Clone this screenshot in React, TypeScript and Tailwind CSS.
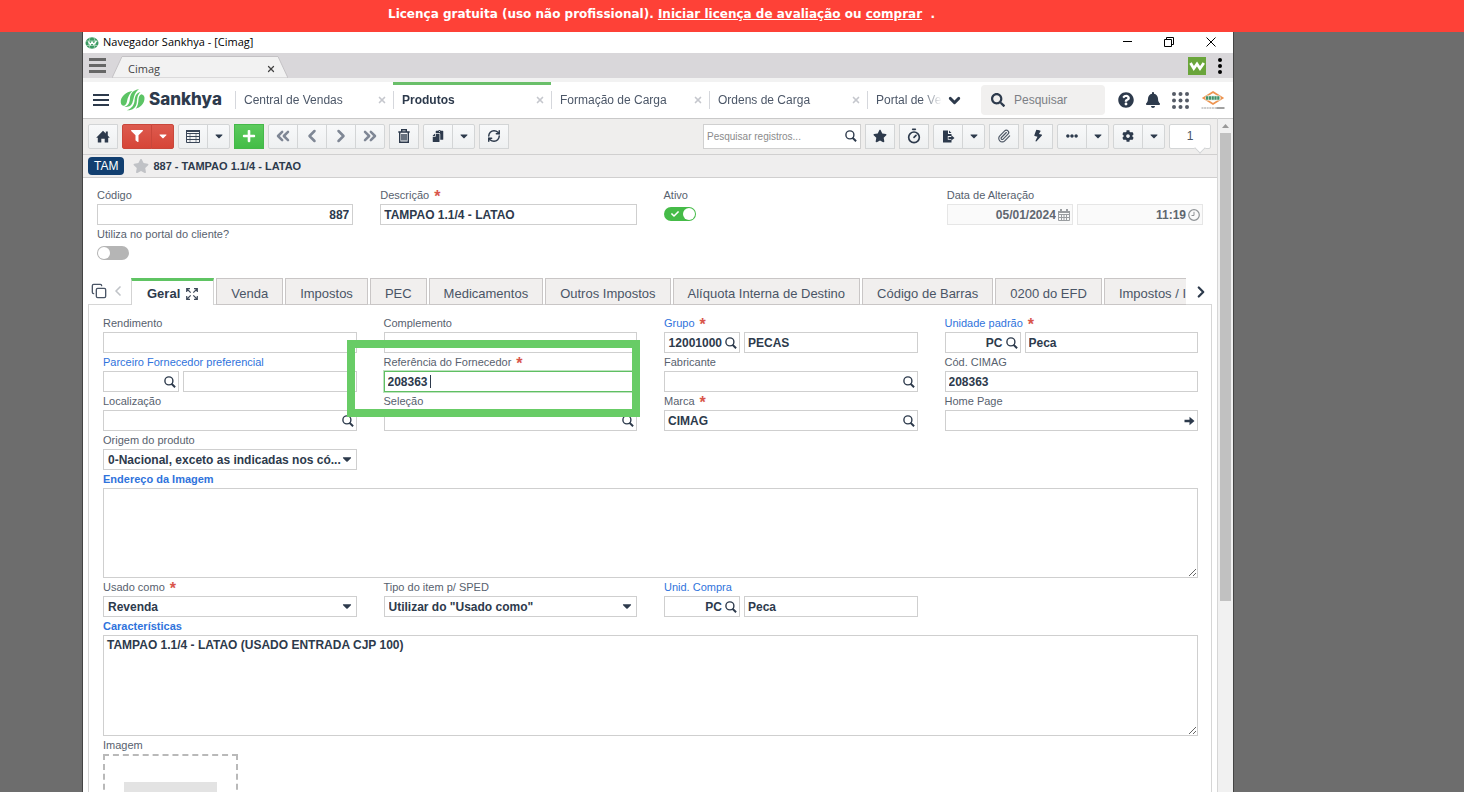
import type { ReactNode } from "react"
import {
  FaBell,
  FaBolt,
  FaCaretDown,
  FaCheck,
  FaCog,
  FaEllipsisH,
  FaFilter,
  FaPaste,
  FaPlus,
  FaQuestionCircle,
  FaSearch,
  FaStar,
} from "react-icons/fa"
import { ChevronDown, ChevronLeft, ChevronRight, ChevronsLeft, ChevronsRight, Copy, Paperclip, RefreshCw, Timer, X } from "lucide-react"

const navTabs = [
  { title: "Central de Vendas" },
  { title: "Produtos", active: true },
  { title: "Formação de Carga" },
  { title: "Ordens de Carga" },
  { title: "Portal de Vendas" },
]

const formTabs = [
  "Venda",
  "Impostos",
  "PEC",
  "Medicamentos",
  "Outros Impostos",
  "Alíquota Interna de Destino",
  "Código de Barras",
  "0200 do EFD",
  "Impostos / IPI",
]

const inputBox =
  "block h-[21px] w-full min-w-0 border border-[#cfcfcf] bg-white px-[3px] text-[12px] font-bold text-[#2d3a4c] outline-none"

const readOnlyBox =
  "block h-[21px] w-full min-w-0 border border-[#e6e6e6] bg-[#fafafa] pr-4 pl-[3px] text-right text-[12px] font-bold text-[#5f6770] outline-none"

/* ---------- drawings ---------- */

function GlobeIcon() {
  return (
    <svg viewBox="0 0 14 12" className="h-3 w-3.5 shrink-0">
      <ellipse cx="7" cy="6" rx="6.5" ry="5.8" fill="#3c9a62" />
      <path d="M1 4h12M1 8.5h12M5 .5q-3 5.5 0 11M9 .5q3 5.5 0 11" stroke="#b9e0c6" strokeWidth=".7" fill="none" />
      <path d="M3.5 4.500l1.800 3 1.700-2.500 1.800 2.500 2.700-3.500" stroke="#fff" strokeWidth="1.300" fill="none" />
    </svg>
  )
}

function SankhyaMark() {
  return (
    <svg viewBox="0 0 25 22" className="h-[22px] w-[25px] shrink-0" fill="#5cc465">
      <path d="M12.500 2C6 2.800 0 8 .8 13.500c.3 2.300 1.800 3.500 3.400 3.200C7.500 15.500 6.500 11.500 8.300 8 9.300 5.500 10.500 3.500 12.500 2z" />
      <path d="M19 .3c-5.500.6-8.500 4-9 8.700-.4 4.200-1 7.500-5.600 9 3 .3 6.500-.6 7.900-4C14 9.800 13.500 4.500 19 .3z" />
      <path d="M20.500 3c-4.800 1.300-5.600 4.700-5.900 8.500-.4 4.200-2.300 7.600-7.800 9.800 5.800.3 9.200-2.700 9.900-7.300.6-4.100.3-7.800 3.800-11z" />
      <path d="M21.500 5.300c2.300.5 3.500 2.500 2.900 5.500-.9 4.600-4.300 7.700-8.600 8.900 2.200-3.300 2.400-5.600 2.700-9.200.2-2.400.8-4.500 3-5.200z" />
    </svg>
  )
}

function HomeIcon() {
  return (
    <svg viewBox="0 0 14 13" className="h-[13px] w-3.5" fill="currentColor">
      <path d="M7 .8L9.800 3.600V1.500h2v4.100L13.800 7.700h-1.600v4.800H8.700V8.700H5.300v3.800H1.800V7.700H.2z" />
    </svg>
  )
}

function GridIcon() {
  return (
    <svg viewBox="0 0 14 13" className="h-[13px] w-3.5" fill="none" stroke="#3a4658">
      <path d="M.5.5h13v12H.5zM.5 3.500h13M.5 6.500h13M.5 9.500h13" />
      <path d="M4 3.500v9M10 3.500v9" strokeWidth=".6" />
      <path d="M0 1h14" strokeWidth="2" />
    </svg>
  )
}

function ExportIcon() {
  return (
    <svg viewBox="0 0 13 13" className="h-[13px] w-[13px]" fill="currentColor">
      <path d="M1 .5h5V4h3.500v2H5.800v3.800h3.700v2.700H1zM7 .5L9.500 3H7z" />
      <path d="M6.500 7h2.800V5.200l3.200 2.700-3.200 2.700V8.900H6.500z" />
    </svg>
  )
}

function CalendarIcon() {
  return (
    <svg viewBox="0 0 12 12" className="h-3 w-3" fill="none" stroke="#9a9da0">
      <path d="M.5 2.500h11v9H.5zM.5 5.500h11M.5 8.500h11M3.500 5v6.500M6 5v6.500M8.500 5v6.500" />
      <path d="M0 3h12M3 0v2M9 0v2" strokeWidth="2" />
    </svg>
  )
}

function ClockIcon() {
  return (
    <svg viewBox="0 0 12 12" className="h-3 w-3" fill="none" stroke="#8f9396">
      <circle cx="6" cy="6" r="5.300" strokeWidth="1.200" />
      <path d="M6 2.800V6.500H3.500" />
    </svg>
  )
}

function TrashIcon() {
  return (
    <svg viewBox="0 0 12 14" className="h-3.5 w-3" fill="none" stroke="#2d3a4c" strokeWidth="1.400">
      <path d="M.3 3h11.400M3.700 2.700V.8h4.600v1.900M1.700 3.500v9.700h8.600V3.500" />
      <path d="M4 5v6.500M8 5v6.500M6 5v6.500" />
    </svg>
  )
}

function ArrowIcon() {
  return (
    <svg viewBox="0 0 11 10" className="h-2.5 w-[11px]" fill="#2d3a4c">
      <path d="M.5 3.800h5V.8L10.500 5 5.500 9.200v-3h-5z" />
    </svg>
  )
}

function AppsIcon() {
  const spots = [2, 8.5, 15]
  return (
    <svg viewBox="0 0 17 17" className="h-[17px] w-[17px]" fill="#555b66">
      {spots.map((y) => spots.map((x) => <circle key={`${x}-${y}`} cx={x} cy={y} r="2" />))}
    </svg>
  )
}

function CimagLogo() {
  return (
    <svg viewBox="0 0 24 20" className="h-5 w-6 shrink-0">
      <path d="M12 2L21.500 8 12 14 2.500 8z" fill="#fff" stroke="#ee9450" strokeWidth="1.800" />
      <rect x="4.500" y="5.500" width="15" height="5" rx="1.500" fill="#e8f3ec" />
      <path d="M5 8h14" stroke="#3f9068" strokeWidth="3.500" strokeDasharray="2.200 .6" />
      <path d="M.5 18h15" stroke="#999" strokeDasharray="2 .6" />
      <path d="M15.500 18h8" stroke="#444" />
    </svg>
  )
}

function ExpandIcon() {
  return (
    <svg viewBox="0 0 12 12" className="h-3 w-3" fill="none" stroke="#3f4a5a" strokeWidth="1.200">
      <path d="M.7 4V.7H4M8 .7h3.300V4M11.300 8v3.300H8M4 11.300H.7V8M1 1l3.700 3.700M11 1L7.300 4.700M11 11L7.300 7.300M1 11l3.700-3.700" />
    </svg>
  )
}

function MiniSearch() {
  return (
    <svg viewBox="0 0 12 12" className="h-3 w-3" fill="none" stroke="#2d3a4c">
      <circle cx="4.900" cy="4.900" r="4" strokeWidth="1.400" />
      <path d="M7.500 7.800l3.600 3.400" strokeWidth="2" />
    </svg>
  )
}

/* ---------- toolbar ---------- */

function ToolButton({ label, children, tone = "plain", narrow = false }: { label: string; children: ReactNode; tone?: "plain" | "red" | "green"; narrow?: boolean }) {
  const tones = {
    plain: "border-[#d3d5d6] bg-linear-to-b from-[#f8f9fa] to-[#eef0f1] text-[#2d3a4c]",
    red: "border-[#c9473b] bg-linear-to-b from-[#dd5a4e] to-[#d64537] text-white",
    green: "border-[#45b849] bg-linear-to-b from-[#5cca5c] to-[#43bd47] text-white",
  }
  return (
    <button
      type="button"
      aria-label={label}
      className={`flex h-[25px] shrink-0 items-center justify-center border first:rounded-l-xs last:rounded-r-xs ${narrow ? "w-[23px]" : "w-[30px]"} ${tones[tone]}`}
    >
      {children}
    </button>
  )
}

function Group({ children }: { children: ReactNode }) {
  return <div className="flex shrink-0 -space-x-px">{children}</div>
}

const caret = <FaCaretDown className="h-3 w-3" />

function Toolbar() {
  return (
    <div className="flex h-9 items-center gap-1 border-t border-[#c9c9c9] bg-[#efeeed] pr-1.5 pb-px pl-[5px]">
      <ToolButton label="Início"><HomeIcon /></ToolButton>
      <Group>
        <ToolButton label="Filtro" tone="red"><FaFilter className="h-3 w-3" /></ToolButton>
        <ToolButton label="Opções de filtro" tone="red" narrow>{caret}</ToolButton>
      </Group>
      <Group>
        <ToolButton label="Modo grade"><GridIcon /></ToolButton>
        <ToolButton label="Opções de grade" narrow>{caret}</ToolButton>
      </Group>
      <ToolButton label="Adicionar" tone="green"><FaPlus className="h-3.5 w-3.5" /></ToolButton>
      <Group>
        <ToolButton label="Primeiro"><ChevronsLeft className="h-5 w-5 text-[#7f8795]" strokeWidth={3} /></ToolButton>
        <ToolButton label="Anterior"><ChevronLeft className="h-5 w-5 text-[#7f8795]" strokeWidth={3} /></ToolButton>
        <ToolButton label="Próximo"><ChevronRight className="h-5 w-5 text-[#7f8795]" strokeWidth={3} /></ToolButton>
        <ToolButton label="Último"><ChevronsRight className="h-5 w-5 text-[#7f8795]" strokeWidth={3} /></ToolButton>
      </Group>
      <ToolButton label="Excluir"><TrashIcon /></ToolButton>
      <Group>
        <ToolButton label="Duplicar"><FaPaste className="h-3 w-3 -scale-x-100" /></ToolButton>
        <ToolButton label="Opções de duplicar" narrow>{caret}</ToolButton>
      </Group>
      <ToolButton label="Atualizar"><RefreshCw className="h-3.5 w-3.5" strokeWidth={2.5} /></ToolButton>

      <div className="ml-auto flex h-[25px] w-[158px] items-center border border-[#d0d0d0] bg-white pr-[3px]">
        <input
          aria-label="Pesquisar registros"
          placeholder="Pesquisar registros..."
          className="min-w-0 flex-1 bg-transparent pl-[3px] text-[10px] outline-none placeholder:text-[#8b8b8b]"
        />
        <MiniSearch />
      </div>
      <ToolButton label="Favorito"><FaStar className="h-3.5 w-3.5" /></ToolButton>
      <ToolButton label="Tempo"><Timer className="h-4 w-4" strokeWidth={2.5} /></ToolButton>
      <Group>
        <ToolButton label="Exportar"><ExportIcon /></ToolButton>
        <ToolButton label="Opções de exportar" narrow>{caret}</ToolButton>
      </Group>
      <ToolButton label="Anexos"><Paperclip className="h-3.5 w-3.5 text-[#4d5765]" strokeWidth={2} /></ToolButton>
      <ToolButton label="Ações"><FaBolt className="h-3 w-3 rotate-12" /></ToolButton>
      <Group>
        <ToolButton label="Mais"><FaEllipsisH className="h-3 w-3" /></ToolButton>
        <ToolButton label="Mais opções" narrow>{caret}</ToolButton>
      </Group>
      <Group>
        <ToolButton label="Configurar"><FaCog className="h-3 w-3" /></ToolButton>
        <ToolButton label="Opções de configuração" narrow>{caret}</ToolButton>
      </Group>
      <div className="relative flex h-[25px] w-[42px] shrink-0 items-center justify-center rounded-xs border border-[#d3d5d6] bg-white text-[12px] text-[#4a5566]">
        1
        <span className="absolute right-1.5 -bottom-1 h-2 w-2 rotate-45 border-r border-b border-[#d3d5d6] bg-white" />
      </div>
    </div>
  )
}

/* ---------- fields ---------- */

function FieldLabel({ id, text, required, link, strong }: { id: string; text: string; required?: boolean; link?: boolean; strong?: boolean }) {
  return (
    <label
      htmlFor={id}
      className={`flex h-[18px] items-center text-[11px] leading-[18px] whitespace-nowrap ${link ? "text-[#2f73dc]" : "text-[#57616e]"} ${strong ? "font-bold" : ""}`}
    >
      {text}
      {required && <span className="ml-[5px] h-[18px] text-base leading-[22px] font-bold text-[#d9554b]">*</span>}
    </label>
  )
}

type FieldProps = {
  id: string
  label: string
  value?: string
  required?: boolean
  link?: boolean
  icon?: ReactNode
}

function Field({ id, label, value, required, link, icon }: FieldProps) {
  return (
    <div className="min-w-0">
      <FieldLabel id={id} text={label} required={required} link={link} />
      <div className="relative">
        <input id={id} defaultValue={value} className={inputBox} />
        {icon && <span className="absolute inset-y-0 right-[3px] flex items-center">{icon}</span>}
      </div>
    </div>
  )
}

// code + description pair
function LookupField({ id, label, code, value, required, link }: FieldProps & { code?: string }) {
  return (
    <div className="min-w-0">
      <FieldLabel id={id} text={label} required={required} link={link} />
      <div className="flex gap-1">
        <div className="relative w-[76px] shrink-0">
          <input id={id} defaultValue={code} className={`${inputBox} pr-[17px] text-right`} />
          <span className="absolute inset-y-0 right-[3px] flex items-center"><MiniSearch /></span>
        </div>
        <input aria-label={`${label} descrição`} defaultValue={value} className={inputBox} />
      </div>
    </div>
  )
}

function SelectField({ id, label, value, required }: FieldProps) {
  return (
    <div className="min-w-0">
      <FieldLabel id={id} text={label} required={required} />
      <div className="relative">
        <select id={id} className={`${inputBox} appearance-none pl-1`}>
          <option>{value}</option>
        </select>
        <FaCaretDown className="pointer-events-none absolute top-[3px] right-[3px] h-3.5 w-3.5 text-[#2d3a4c]" />
      </div>
    </div>
  )
}

function Toggle({ id, on }: { id: string; on?: boolean }) {
  return (
    <span className="relative flex h-3.5 w-8">
      <input
        id={id}
        type="checkbox"
        role="switch"
        defaultChecked={on}
        className="h-3.5 w-8 appearance-none rounded-full bg-[#b5b5b5] checked:bg-[#45bb48]"
      />
      {on && <FaCheck className="pointer-events-none absolute top-[3px] left-1.5 h-2 w-2.5 text-white" />}
      <span className={`pointer-events-none absolute top-px h-3 w-3 rounded-full bg-white ${on ? "right-px" : "left-px"}`} />
    </span>
  )
}

/* ---------- sections ---------- */

function TitleBar() {
  return (
    <>
      <div className="flex h-[21px] items-center bg-white pr-[17px] pl-0.5 font-['Open_Sans',sans-serif] text-[11px] text-black">
        <GlobeIcon />
        <span className="ml-1 flex-1">Navegador Sankhya - [Cimag]</span>
        <div className="flex items-center gap-8 pb-0.5">
          <button type="button" aria-label="Minimizar" className="h-px w-[9px] bg-black" />
          <button type="button" aria-label="Restaurar">
            <svg viewBox="0 0 10 10" className="h-2.5 w-2.5" fill="none" stroke="#000">
              <path d="M.5 2.500h7v7h-7zM2.500 2.500v-2h7v7h-2" />
            </svg>
          </button>
          <button type="button" aria-label="Fechar">
            <svg viewBox="0 0 10 10" className="h-2.5 w-2.5" stroke="#000">
              <path d="M.5.5l9 9M9.500.5l-9 9" />
            </svg>
          </button>
        </div>
      </div>
      <div className="flex h-[25px] items-end bg-[#d9d7da] pr-2.5 pl-1.5">
        <button type="button" aria-label="Menu" className="flex h-[25px] w-[17px] flex-col justify-center gap-[3px]">
          <span className="h-[3px] bg-[#666]" />
          <span className="h-[3px] bg-[#666]" />
          <span className="h-[3px] bg-[#666]" />
        </button>
        <div className="relative ml-1.5 h-[22px] w-[176px]">
          <svg viewBox="0 0 176 22" preserveAspectRatio="none" className="absolute inset-0 h-full w-full">
            <path d="M0 22L10 .5h156L176 22z" fill="#f2f2f2" stroke="#c4c2c5" />
          </svg>
          <div className="relative flex h-full items-center justify-between pt-1 pr-3 pl-4 font-['Open_Sans',sans-serif] text-[11px] text-[#444]">
            <span>Cimag</span>
            <X className="h-2.5 w-2.5" strokeWidth={3} />
          </div>
        </div>
        <div className="ml-auto flex h-[25px] items-center gap-[11px]">
          <svg viewBox="0 0 18 18" className="h-[18px] w-[18px]">
            <path d="M0 0h18v18H0z" fill="#6aa53b" />
            <path d="M2.500 6l3.300 5.500L9 7l3 4.500L15.800 6" fill="none" stroke="#fff" strokeWidth="2.800" />
          </svg>
          <button type="button" aria-label="Opções">
            <svg viewBox="0 0 6 16" className="h-4 w-1.5">
              <circle cx="3" cy="2" r="2" />
              <circle cx="3" cy="8" r="2" />
              <circle cx="3" cy="14" r="2" />
            </svg>
          </button>
        </div>
      </div>
      <div className="h-1 bg-[#f2f2f2]" />
    </>
  )
}

function NavBar() {
  return (
    <header className="flex h-[36px] items-center bg-white pr-2 pl-2.5">
      <button type="button" aria-label="Menu principal" className="flex w-4 flex-col gap-[3px]">
        <span className="h-0.5 bg-[#2d3a4c]" />
        <span className="h-0.5 bg-[#2d3a4c]" />
        <span className="h-0.5 bg-[#2d3a4c]" />
      </button>
      <a href="#" className="ml-[11px] flex items-center gap-1 text-[#2d3a4c]">
        <SankhyaMark />
        <span className="w-[86px] pb-0.5 font-['Inter',sans-serif] text-[17px] leading-5 font-extrabold">Sankhya</span>
      </a>
      <nav className="flex h-full min-w-0 flex-1 overflow-hidden mask-r-from-[calc(100%-20px)]">
        {navTabs.map((tab) => (
          <a
            key={tab.title}
            href="#"
            className={`flex w-[158px] shrink-0 items-center border-t-3 pb-1 text-[12px] ${tab.active ? "border-[#6abf6a] font-bold text-[#2d3a4c]" : "border-transparent text-[#4c5768]"}`}
          >
            <span className="h-[18px] w-[9px] border-l border-[#d5d7dc]" />
            {tab.title}
            <X className="mr-1.5 ml-auto h-2.5 w-2.5 text-[#c5c7cd]" strokeWidth={4} />
          </a>
        ))}
      </nav>
      <button type="button" aria-label="Mais abas" className="mr-1.5 ml-1">
        <ChevronDown className="h-[17px] w-[17px] text-[#2d3a4c]" strokeWidth={4} />
      </button>
      <div className="ml-3 flex h-[30px] w-[124px] items-center rounded-sm bg-[#f1f0ef] pl-2.5">
        <FaSearch className="h-3.5 w-3.5 shrink-0 text-[#2d3a4c]" />
        <input
          aria-label="Pesquisar"
          placeholder="Pesquisar"
          className="ml-[9px] w-20 bg-transparent text-[12px] outline-none placeholder:text-[#7c7f85]"
        />
      </div>
      <div className="ml-[13px] flex items-center gap-3 text-[#2d3a4c]">
        <button type="button" aria-label="Ajuda"><FaQuestionCircle className="h-4 w-4" /></button>
        <button type="button" aria-label="Notificações"><FaBell className="h-4 w-3.5" /></button>
        <button type="button" aria-label="Aplicativos"><AppsIcon /></button>
        <CimagLogo />
      </div>
    </header>
  )
}

function RecordHeader() {
  return (
    <section className="grid grid-cols-4 gap-x-[27px] px-3.5 pt-2">
      <div>
        <FieldLabel id="codigo" text="Código" />
        <input id="codigo" defaultValue="887" className={`${inputBox} text-right`} />
        <FieldLabel id="portal" text="Utiliza no portal do cliente?" />
        <div className="pt-[3px]"><Toggle id="portal" /></div>
      </div>
      <Field id="descricao" label="Descrição" value="TAMPAO 1.1/4 - LATAO" required />
      <div>
        <FieldLabel id="ativo" text="Ativo" />
        <div className="pt-[3px]"><Toggle id="ativo" on /></div>
      </div>
      <div>
        <FieldLabel id="data" text="Data de Alteração" />
        <div className="flex gap-1">
          <div className="relative flex-1">
            <input id="data" readOnly defaultValue="05/01/2024" className={readOnlyBox} />
            <span className="absolute inset-y-0 right-[3px] flex items-center"><CalendarIcon /></span>
          </div>
          <div className="relative flex-1">
            <input aria-label="Hora de Alteração" readOnly defaultValue="11:19" className={readOnlyBox} />
            <span className="absolute inset-y-0 right-[3px] flex items-center"><ClockIcon /></span>
          </div>
        </div>
      </div>
    </section>
  )
}

function FormTabs() {
  return (
    <div className="relative z-10 -mb-px flex h-[27px] items-end text-[13px] text-[#4a5566]">
      <button type="button" aria-label="Copiar" className="mb-1.5 ml-[3px]"><Copy className="h-4 w-4 text-[#4a5566]" strokeWidth={2} /></button>
      <button type="button" aria-label="Abas anteriores" className="mb-1.5 ml-[3px] text-[#c0c3c8]"><ChevronLeft className="h-4 w-4" strokeWidth={2.5} /></button>
      <div className="ml-[5px] flex min-w-0 flex-1 items-end gap-0.5 overflow-hidden">
        <button
          type="button"
          className="flex h-[27px] shrink-0 items-center gap-1.5 border-x border-t-3 border-x-[#d3d3d3] border-t-[#5fc463] bg-white px-[15px] pt-0.5 font-bold text-[#2d3a4c]"
        >
          Geral <ExpandIcon />
        </button>
        {formTabs.map((tab) => (
          <button
            key={tab}
            type="button"
            className="h-[27px] shrink-0 border border-[#c9c6c6] bg-[#f1efee] px-[14px] pt-1 whitespace-nowrap"
          >
            {tab}
          </button>
        ))}
      </div>
      <button type="button" aria-label="Próximas abas" className="mr-0.5 mb-1 ml-1.5 text-[#2d3a4c]"><ChevronRight className="h-[18px] w-[18px]" strokeWidth={3} /></button>
    </div>
  )
}

function GeneralPanel() {
  return (
    <section className="border border-b-0 border-[#d6d6d6] bg-white pt-[9px] pr-[13px] pl-3.5">
      <div className="grid grid-cols-4 gap-x-[27px]">
        <Field id="rendimento" label="Rendimento" />
        <Field id="complemento" label="Complemento" />
        <LookupField id="grupo" label="Grupo" code="12001000" value="PECAS" required link />
        <LookupField id="unidade" label="Unidade padrão" code="PC" value="Peca" required link />

        <LookupField id="parceiro" label="Parceiro Fornecedor preferencial" link />
        <div className="relative">
          <FieldLabel id="referencia" text="Referência do Fornecedor" required />
          <input id="referencia" defaultValue="208363" className={`${inputBox} border-[#5fbf62]! ring-1 ring-[#bfe3c0]`} />
          <span className="absolute bottom-1 left-[46px] h-[13px] w-px bg-[#2d3a4c]" />
          <span className="pointer-events-none absolute -top-[13px] -right-[3px] -bottom-[25px] -left-[37px] z-10 border-8 border-[#68cc66]" />
        </div>
        <Field id="fabricante" label="Fabricante" icon={<MiniSearch />} />
        <Field id="cod-cimag" label="Cód. CIMAG" value="208363" />

        <Field id="localizacao" label="Localização" icon={<MiniSearch />} />
        <Field id="selecao" label="Seleção" icon={<MiniSearch />} />
        <Field id="marca" label="Marca" value="CIMAG" required icon={<MiniSearch />} />
        <Field id="home-page" label="Home Page" icon={<ArrowIcon />} />

        <SelectField id="origem" label="Origem do produto" value="0-Nacional, exceto as indicadas nos có..." />
      </div>

      <FieldLabel id="endereco" text="Endereço da Imagem" link strong />
      <textarea id="endereco" className="block h-[90px] w-full border border-[#cfcfcf] outline-none" />

      <div className="grid grid-cols-4 gap-x-[27px]">
        <SelectField id="usado-como" label="Usado como" value="Revenda" required />
        <SelectField id="tipo-sped" label="Tipo do item p/ SPED" value={'Utilizar do "Usado como"'} />
        <LookupField id="unid-compra" label="Unid. Compra" code="PC" value="Peca" link />
      </div>

      <FieldLabel id="caracteristicas" text="Características" link strong />
      <textarea
        id="caracteristicas"
        defaultValue="TAMPAO 1.1/4 - LATAO (USADO ENTRADA CJP 100)"
        className="block h-[101px] w-full border border-[#cfcfcf] px-[3px] text-[12px] leading-[18px] font-bold text-[#2d3a4c] outline-none"
      />

      <FieldLabel id="imagem" text="Imagem" />
      <button id="imagem" type="button" className="flex h-[135px] w-[135px] items-center border-2 border-dashed border-[#b9b9b9] px-[19px]">
        <span className="h-20 flex-1 bg-[#e3e3e3]" />
      </button>
    </section>
  )
}

export default function App() {
  return (
    <div className="flex h-screen flex-col overflow-hidden bg-[#6d6d6d] font-['Liberation_Sans',Arial,sans-serif]">
      <div className="h-8 shrink-0 bg-[#fe4137] pl-[388px] font-['DejaVu_Sans',sans-serif] text-[12px] leading-7 font-bold whitespace-pre text-white">
        Licença gratuita (uso não profissional). <a href="#" className="underline">Iniciar licença de avaliação</a> ou <a href="#" className="underline">comprar</a>  .
      </div>

      <div className="mr-[230px] ml-[82px] flex min-h-0 flex-1 flex-col border-x border-[#444] bg-white">
        <TitleBar />
        <NavBar />
        <div className="flex min-h-0 flex-1">
          <main className="min-w-0 flex-1 overflow-hidden border-r border-[#d6d6d6]">
            <Toolbar />
            <div className="flex h-6 items-center border-y border-[#d0cfcf] bg-[#efeeee] pl-[5px]">
              <span className="rounded-sm bg-[#123f70] px-1.5 text-[12px] leading-[18px] text-white">TAM</span>
              <FaStar className="ml-[9px] h-4 w-4 text-[#c0c2c6]" />
              <span className="ml-1 text-[11px] font-bold text-[#2d3a4c]">887 - TAMPAO 1.1/4 - LATAO</span>
            </div>
            <RecordHeader />
            <div className="mt-[18px] px-[5px]">
              <FormTabs />
              <GeneralPanel />
            </div>
          </main>
          <div className="flex w-[15px] flex-col border-t border-[#c9c9c9] bg-[#f1f1f1] px-0.5">
            <svg viewBox="0 0 11 14" className="h-3.5 w-[11px] shrink-0">
              <path d="M2 9h7L5.500 5z" fill="#999" />
            </svg>
            <div className="flex-1">
              <div className="h-[71%] bg-[#c1c1c1]" />
            </div>
          </div>
        </div>
      </div>
    </div>
  )
}
